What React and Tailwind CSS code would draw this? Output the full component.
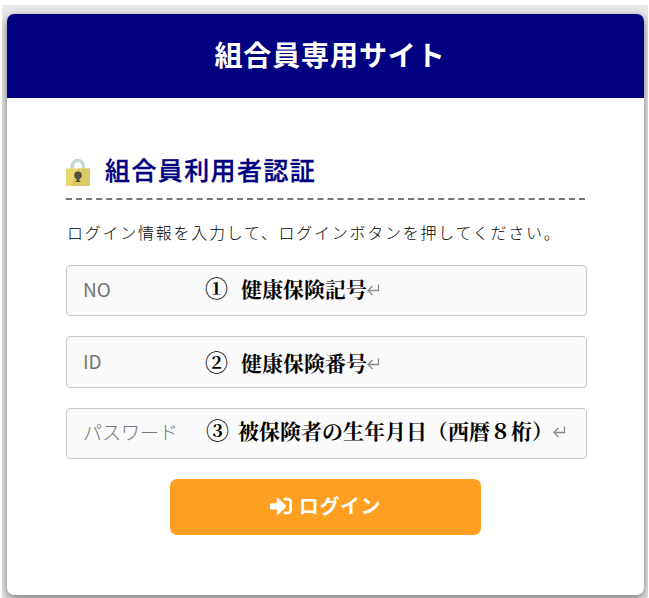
import { FaSignInAlt } from 'react-icons/fa'

const fields = [
  { name: 'no', placeholder: 'NO', mark: '①', note: '健康保険記号', box: 'h-[51px]', row: 'left-[139px] top-[8px]', gap: 'gap-[13px]', end: 'mt-[3px]' },
  { name: 'id', placeholder: 'ID', mark: '②', note: '健康保険番号', box: 'h-[52px]', row: 'left-[139px] top-[11px]', gap: 'gap-[13px]', end: 'mt-[3px]' },
  { name: 'password', placeholder: 'パスワード', mark: '③', note: '被保険者の生年月日（西暦８桁）', box: 'h-[51px]', row: 'left-[140px] top-[7px]', gap: 'gap-[9px]', end: 'mt-[3px]' },
]

function LockIcon() {
  return (
    <svg width="24" height="28" viewBox="0 0 24 28">
      <path d="M6.5 12V8a5.5 5.5 0 0 1 11 0v4" fill="none" stroke="#c5dccf" strokeWidth="3.4" />
      <path d="M5.2 10V7.6a6.8 6.8 0 0 1 6.8-6.4" fill="none" stroke="#b3cfc2" strokeWidth="0.8" />
      <path d="M0 10.5h24V27a1 1 0 0 1-1 1H1a1 1 0 0 1-1-1z" fill="#ead66f" />
      <path d="M12 10.5h12V27a1 1 0 0 1-1 1H5z" fill="#dcc864" />
      <circle cx="12" cy="17.3" r="3.8" fill="#51503d" />
      <path d="M10.6 18h2.8v5h1.1v1h-5v-1h1.1z" fill="#51503d" />
    </svg>
  )
}

function ReturnMark({ className }) {
  return (
    <svg width="13" height="12" viewBox="0 0 13 12" fill="none" stroke="#8c8c8c" strokeWidth="1.3" className={className}>
      <path d="M11.5 0.5v6H1M5.5 2L1 6.5L5.5 11" />
    </svg>
  )
}

export default function App() {
  return (
    <div className="h-[598px] w-[649px] overflow-hidden bg-white pl-[2px] pt-[5px] font-['Noto_Sans_CJK_JP',sans-serif]">
      <div className="h-[593px] w-[646px] overflow-hidden bg-[#e8e8e8] pl-[5px] pt-[9px]">
        <div className="h-[581px] w-[637px] overflow-hidden rounded-[7px] bg-white shadow-[0_3px_8px_rgba(0,0,0,0.5)]">
          <header className="flex h-[84px] items-center justify-center bg-[#000080] pb-[4px] pl-[9px]">
            <h1 className="text-[28px] leading-none font-bold tracking-[0.9px] text-white">組合員専用サイト</h1>
          </header>

          <main className="pl-[59px] pt-[54px]">
            <div className="flex h-[48px] w-[519px] border-b-2 border-dashed border-[#777]">
              <div className="pt-[6px]">
                <LockIcon />
              </div>
              <h2 className="ml-[15px] mt-[3px] text-[25px] leading-[28px] font-medium tracking-[1.4px] text-[#000080] [-webkit-text-stroke:0.3px_#000080]">組合員利用者認証</h2>
            </div>

            <p className="mt-[20px] ml-px h-[24px] text-[16px] leading-[25px] font-light tracking-[1.74px] whitespace-nowrap text-black">
              ログイン情報を入力して、ログインボタンを押してください。
            </p>

            <form className="mt-[21px] flex flex-col gap-5" onSubmit={(e) => e.preventDefault()}>
              {fields.map((f) => (
                <div key={f.name} className="relative w-[521px]">
                  <input
                    name={f.name}
                    placeholder={f.placeholder}
                    className={`block w-full rounded-[4px] border border-[#c8c8c8] bg-[#fafafa] pb-1 pl-4 text-[19px] placeholder:text-[#757575] ${f.name === 'password' ? 'font-light' : 'font-normal'} ${f.box}`}
                  />
                  {/* note laid over the field */}
                  <div className={`pointer-events-none absolute flex items-center font-['Noto_Serif_CJK_JP','Noto_Sans_CJK_JP',serif] text-[21px] leading-[30px] font-bold whitespace-nowrap text-black ${f.row} ${f.gap}`}>
                    <span className="w-[23px] text-[23px] font-bold">{f.mark}</span>
                    <span className="flex items-center">
                      {f.note}
                      <ReturnMark className={f.end} />
                    </span>
                  </div>
                </div>
              ))}
              <button className="ml-[104px] flex h-[56px] w-[311px] items-center justify-center gap-[7px] rounded-[7px] bg-[#ff9f21] pb-[2px] text-[20px] leading-none font-bold text-white">
                <FaSignInAlt className="h-[22px] w-[22px]" />
                <span className="tracking-[0.6px]">ログイン</span>
              </button>
            </form>
          </main>
        </div>
      </div>
    </div>
  )
}
